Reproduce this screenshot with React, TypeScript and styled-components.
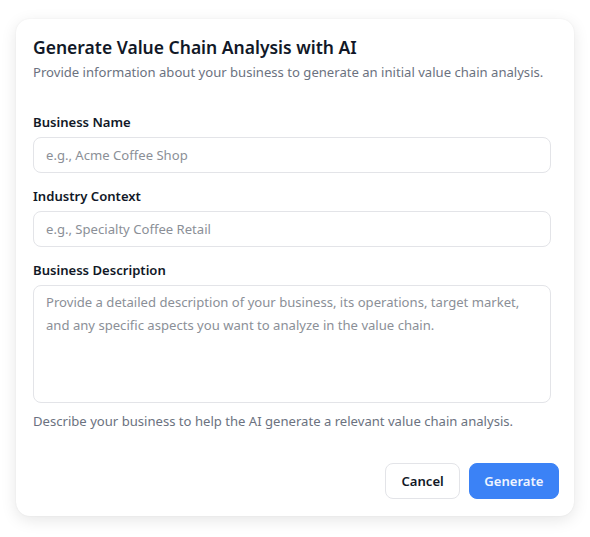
import React from 'react';
import styled, { createGlobalStyle } from 'styled-components';

const GlobalStyle = createGlobalStyle`
  html, body {
    margin: 0;
    padding: 0;
    background: #ffffff;
    font-family: "Noto Sans", "Open Sans", sans-serif;
    color: #111827;
  }
  * { box-sizing: border-box; }
`;

const Page = styled.div`
  padding: 19px 16px 22px 16px;
`;

const Dialog = styled.div`
  width: 558px;
  background: #fff;
  border-radius: 14px;
  box-shadow: 0 4px 16px rgba(0, 0, 0, 0.1), 0 0 2px rgba(0, 0, 0, 0.06);
  padding: 16px 15px 17px 17px;
  display: flex;
  flex-direction: column;
`;

const Title = styled.h2`
  margin: 0;
  font-size: 17.5px;
  line-height: 24px;
  font-weight: 600;
  color: #111827;
`;

const Subtitle = styled.p`
  margin: 3px 0 0 0;
  font-size: 13.1px;
  line-height: 20px;
  color: #6b7280;
`;

const Form = styled.div`
  display: flex;
  flex-direction: column;
  gap: 13px;
  margin-top: 30px;
  padding-right: 8px;
`;

const Field = styled.div`
  display: flex;
  flex-direction: column;
  gap: 5px;
`;

const Label = styled.label`
  font-size: 13.1px;
  line-height: 20px;
  font-weight: 600;
  color: #111827;
`;

const Input = styled.input`
  height: 36px;
  border: 1px solid #e3e4e8;
  border-radius: 8px;
  padding: 0 12px;
  font-family: inherit;
  font-size: 13.1px;
  color: #111827;
  outline: none;
  &::placeholder { color: #8b8f97; }
`;

const TextArea = styled.textarea`
  height: 118px;
  border: 1px solid #e3e4e8;
  border-radius: 8px;
  padding: 5px 12px;
  font-family: inherit;
  font-size: 13.1px;
  line-height: 23px;
  resize: none;
  outline: none;
  &::placeholder { color: #8b8f97; }
`;

const Hint = styled.p`
  margin: 3px 0 0 0;
  font-size: 13.1px;
  line-height: 20px;
  color: #6b7280;
`;

const Footer = styled.div`
  display: flex;
  justify-content: flex-end;
  gap: 9px;
  margin-top: 32px;
`;

const Button = styled.button<{ $primary?: boolean }>`
  height: 36px;
  padding: 0 ${(p) => (p.$primary ? '14.5px' : '15px')};
  border-radius: 8px;
  font-family: inherit;
  font-size: 13.1px;
  font-weight: 600;
  cursor: pointer;
  border: 1px solid ${(p) => (p.$primary ? '#3b82f6' : '#e3e4e8')};
  background: ${(p) => (p.$primary ? '#3b82f6' : '#ffffff')};
  color: ${(p) => (p.$primary ? '#eef4ff' : '#111827')};
`;

export default function App() {
  return (
    <>
      <GlobalStyle />
      <Page>
        <Dialog>
          <Title>Generate Value Chain Analysis with AI</Title>
          <Subtitle>Provide information about your business to generate an initial value chain analysis.</Subtitle>
          <Form>
            <Field>
              <Label>Business Name</Label>
              <Input placeholder="e.g., Acme Coffee Shop" />
            </Field>
            <Field>
              <Label>Industry Context</Label>
              <Input placeholder="e.g., Specialty Coffee Retail" />
            </Field>
            <Field>
              <Label>Business Description</Label>
              <TextArea placeholder="Provide a detailed description of your business, its operations, target market, and any specific aspects you want to analyze in the value chain." />
              <Hint>Describe your business to help the AI generate a relevant value chain analysis.</Hint>
            </Field>
          </Form>
          <Footer>
            <Button>Cancel</Button>
            <Button $primary>Generate</Button>
          </Footer>
        </Dialog>
      </Page>
    </>
  );
}
